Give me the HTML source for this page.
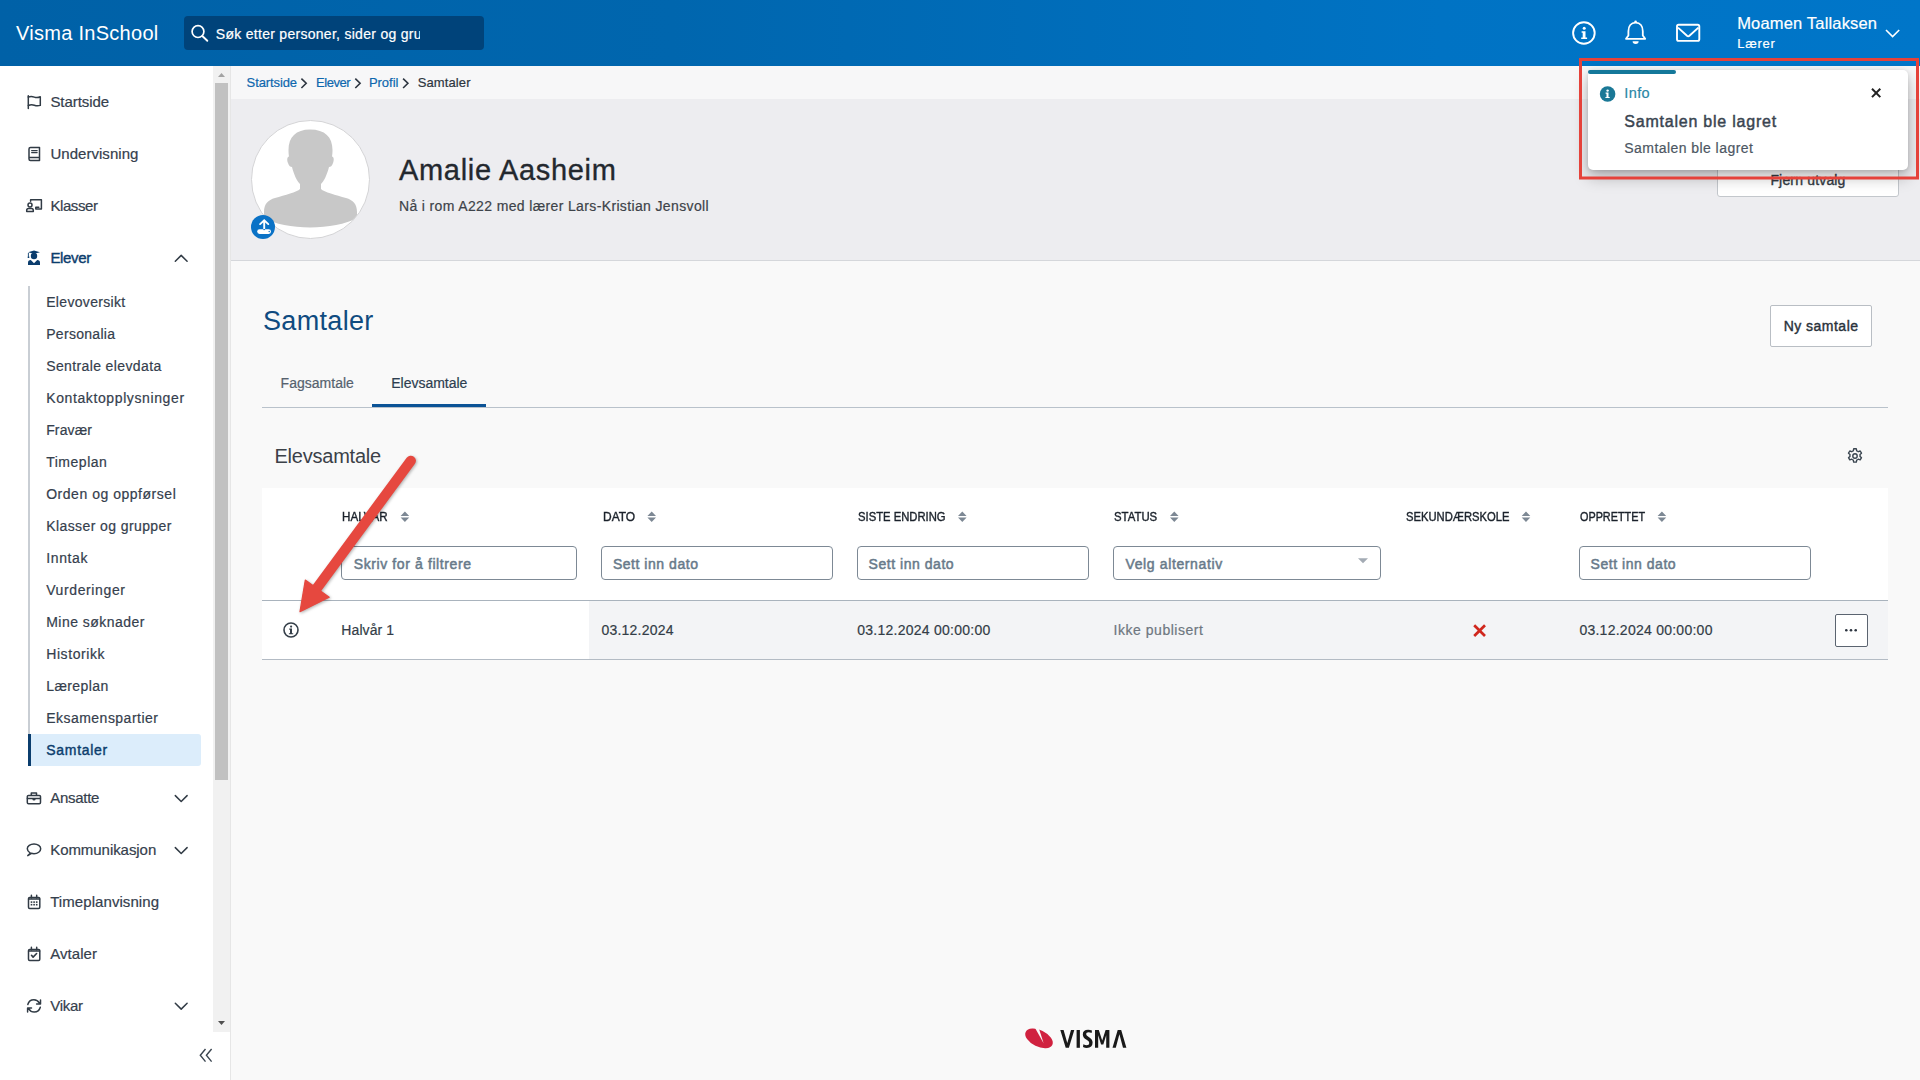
<!DOCTYPE html>
<html><head><meta charset="utf-8">
<style>
*{box-sizing:border-box;margin:0;padding:0}
html,body{width:1920px;height:1080px;overflow:hidden;background:#f9f9f9;font-family:"Liberation Sans",sans-serif;color:#333d47}
.b{position:absolute}
.t{position:absolute;white-space:nowrap;line-height:1}
svg{position:absolute;left:0;top:0;overflow:visible}
</style></head><body>
<!-- backgrounds -->
<div class="b" style="left:0;top:0;width:1920px;height:66px;background:linear-gradient(90deg,#0061a7 0%,#0066ae 35%,#0073c4 75%,#0076c9 100%)"></div>
<div class="b" style="left:184px;top:16px;width:300px;height:34px;background:#00437a;border-radius:4px"></div>
<div class="b" style="left:0;top:66px;width:213px;height:1014px;background:#fff"></div>
<div class="b" style="left:213px;top:66px;width:17px;height:966px;background:#f1f1f1"></div>
<div class="b" style="left:215px;top:83px;width:13px;height:697px;background:#c1c1c1"></div>
<div class="b" style="left:213px;top:1032px;width:17px;height:48px;background:#fff"></div>
<div class="b" style="left:230px;top:66px;width:1px;height:1014px;background:#e6e6e6"></div>
<div class="b" style="left:231px;top:66px;width:1689px;height:33px;background:#f7f7f8"></div>
<div class="b" style="left:231px;top:99px;width:1689px;height:161px;background:#ededf0"></div>
<div class="b" style="left:231px;top:260px;width:1689px;height:1px;background:#d5d7db"></div>
<!-- submenu -->
<div class="b" style="left:28px;top:286px;width:2px;height:480px;background:#c9ced4"></div>
<div class="b" style="left:28px;top:734px;width:173px;height:32px;background:#dcedfb;border-radius:0 3px 3px 0"></div>
<div class="b" style="left:28px;top:734px;width:3px;height:32px;background:#0b3d6d"></div>
<!-- avatar -->
<div class="b" style="left:251px;top:120px;width:119px;height:119px;border-radius:50%;background:#fff;border:1px solid #d4d4d6;overflow:hidden">
 <svg width="119" height="119" viewBox="251 120 119 119" style="left:-1px;top:-1px">
  <path fill="#c8c8c8" d="M310 129.5C296 129.5 288.5 137 288.5 150C288.5 153 288.7 155 289 156.5C287 157 286.8 160 288 163C289 166 290.5 167 292 167C294 175 297 181 300 184L300 189C297 192 285 195 275 198C268 200 264 204 264 212L264 218C285 230.5 335 230.5 357 218L357 212C357 204 353 200 346 198C336 195 324 192 321 189L321 184C324 181 327 175 329 167C330.5 167 332 166 333 163C334.2 160 334 157 332 156.5C332.3 155 332.5 153 332.5 150C332.5 137 325 129.5 310 129.5Z"/>
 </svg>
</div>
<div class="b" style="left:251px;top:215px;width:24px;height:24px;border-radius:50%;background:#0a72c6"></div>
<!-- Fjern utvalg button -->
<div class="b" style="left:1717px;top:158px;width:182px;height:39px;background:#fff;border:1px solid #c3c7cc;border-radius:3px"></div>
<!-- Ny samtale button -->
<div class="b" style="left:1770px;top:305px;width:102px;height:42px;background:#fff;border:1px solid #b9bec4;border-radius:2px"></div>
<!-- tabs -->
<div class="b" style="left:262px;top:407px;width:1626px;height:1px;background:#b9c2cb"></div>
<div class="b" style="left:372px;top:404px;width:114px;height:3px;background:#0b5396"></div>
<!-- table -->
<div class="b" style="left:262px;top:488px;width:1626px;height:112px;background:#fff"></div>
<div class="b" style="left:262px;top:600px;width:1626px;height:1px;background:#a9b3bd"></div>
<div class="b" style="left:262px;top:601px;width:327px;height:58px;background:#fff"></div>
<div class="b" style="left:589px;top:601px;width:1299px;height:58px;background:#f3f4f6"></div>
<div class="b" style="left:262px;top:659px;width:1626px;height:1px;background:#b3bbc4"></div>
<div class="b" style="left:341px;top:546px;width:236px;height:34px;border:1.3px solid #7d8995;border-radius:4px;background:#fff"></div>
<div class="b" style="left:601px;top:546px;width:232px;height:34px;border:1.3px solid #7d8995;border-radius:4px;background:#fff"></div>
<div class="b" style="left:857px;top:546px;width:232px;height:34px;border:1.3px solid #7d8995;border-radius:4px;background:#fff"></div>
<div class="b" style="left:1113px;top:546px;width:268px;height:34px;border:1.3px solid #7d8995;border-radius:4px;background:#fff"></div>
<div class="b" style="left:1579px;top:546px;width:232px;height:34px;border:1.3px solid #7d8995;border-radius:4px;background:#fff"></div>
<div class="b" style="left:1835px;top:614px;width:33px;height:33px;border:1px solid #5b6470;border-radius:2px;background:#fff"></div>

<!-- search text -->
<div class="b" style="left:215.8px;top:16px;width:204.5px;height:34px;overflow:hidden">
 <div class="t" style="left:0;top:11.15px;font-size:14px;color:#fff;-webkit-text-stroke:0.2px #fff;letter-spacing:0.285px">Søk etter personer, sider og gru</div>
</div>

<div class='t' style='left:16.0px;top:23.07px;font-size:20px;color:#fff;letter-spacing:0.279px;'>Visma InSchool</div>
<div class='t' style='left:1737.2px;top:15.03px;font-size:16.5px;-webkit-text-stroke:0.2px #fff;color:#fff;letter-spacing:0.170px;'>Moamen Tallaksen</div>
<div class='t' style='left:1737.2px;top:36.79px;font-size:13px;-webkit-text-stroke:0.2px #fff;color:#fff;letter-spacing:0.742px;'>Lærer</div>
<div class='t' style='left:50.4px;top:93.90px;font-size:15px;-webkit-text-stroke:0.2px #35404d;color:#35404d;letter-spacing:-0.067px;'>Startside</div>
<div class='t' style='left:50.4px;top:145.80px;font-size:15px;-webkit-text-stroke:0.2px #35404d;color:#35404d;letter-spacing:0.038px;'>Undervisning</div>
<div class='t' style='left:50.4px;top:197.80px;font-size:15px;-webkit-text-stroke:0.2px #35404d;color:#35404d;letter-spacing:-0.404px;'>Klasser</div>
<div class='t' style='left:50.4px;top:249.60px;font-size:15px;-webkit-text-stroke:0.4px #0b3d6d;color:#0b3d6d;letter-spacing:-0.322px;'>Elever</div>
<div class='t' style='left:46.2px;top:295.15px;font-size:14px;-webkit-text-stroke:0.2px #35404d;color:#35404d;letter-spacing:0.328px;'>Elevoversikt</div>
<div class='t' style='left:46.2px;top:327.15px;font-size:14px;-webkit-text-stroke:0.2px #35404d;color:#35404d;letter-spacing:0.304px;'>Personalia</div>
<div class='t' style='left:46.2px;top:359.15px;font-size:14px;-webkit-text-stroke:0.2px #35404d;color:#35404d;letter-spacing:0.378px;'>Sentrale elevdata</div>
<div class='t' style='left:46.2px;top:391.15px;font-size:14px;-webkit-text-stroke:0.2px #35404d;color:#35404d;letter-spacing:0.612px;'>Kontaktopplysninger</div>
<div class='t' style='left:46.2px;top:423.15px;font-size:14px;-webkit-text-stroke:0.2px #35404d;color:#35404d;letter-spacing:0.112px;'>Fravær</div>
<div class='t' style='left:46.2px;top:455.15px;font-size:14px;-webkit-text-stroke:0.2px #35404d;color:#35404d;letter-spacing:0.517px;'>Timeplan</div>
<div class='t' style='left:46.2px;top:487.15px;font-size:14px;-webkit-text-stroke:0.2px #35404d;color:#35404d;letter-spacing:0.526px;'>Orden og oppførsel</div>
<div class='t' style='left:46.2px;top:519.15px;font-size:14px;-webkit-text-stroke:0.2px #35404d;color:#35404d;letter-spacing:0.406px;'>Klasser og grupper</div>
<div class='t' style='left:46.2px;top:551.15px;font-size:14px;-webkit-text-stroke:0.2px #35404d;color:#35404d;letter-spacing:0.643px;'>Inntak</div>
<div class='t' style='left:46.2px;top:583.15px;font-size:14px;-webkit-text-stroke:0.2px #35404d;color:#35404d;letter-spacing:0.614px;'>Vurderinger</div>
<div class='t' style='left:46.2px;top:615.15px;font-size:14px;-webkit-text-stroke:0.2px #35404d;color:#35404d;letter-spacing:0.477px;'>Mine søknader</div>
<div class='t' style='left:46.2px;top:647.15px;font-size:14px;-webkit-text-stroke:0.2px #35404d;color:#35404d;letter-spacing:0.592px;'>Historikk</div>
<div class='t' style='left:46.2px;top:679.15px;font-size:14px;-webkit-text-stroke:0.2px #35404d;color:#35404d;letter-spacing:0.418px;'>Læreplan</div>
<div class='t' style='left:46.2px;top:711.15px;font-size:14px;-webkit-text-stroke:0.2px #35404d;color:#35404d;letter-spacing:0.477px;'>Eksamenspartier</div>
<div class='t' style='left:46.2px;top:743.35px;font-size:14px;-webkit-text-stroke:0.4px #0b3d6d;color:#0b3d6d;letter-spacing:0.721px;'>Samtaler</div>
<div class='t' style='left:50.2px;top:790.30px;font-size:15px;-webkit-text-stroke:0.2px #35404d;color:#35404d;letter-spacing:-0.268px;'>Ansatte</div>
<div class='t' style='left:50.2px;top:842.30px;font-size:15px;-webkit-text-stroke:0.2px #35404d;color:#35404d;letter-spacing:-0.055px;'>Kommunikasjon</div>
<div class='t' style='left:50.2px;top:894.30px;font-size:15px;-webkit-text-stroke:0.2px #35404d;color:#35404d;letter-spacing:0.071px;'>Timeplanvisning</div>
<div class='t' style='left:50.2px;top:946.30px;font-size:15px;-webkit-text-stroke:0.2px #35404d;color:#35404d;letter-spacing:0.054px;'>Avtaler</div>
<div class='t' style='left:50.2px;top:998.00px;font-size:15px;-webkit-text-stroke:0.2px #35404d;color:#35404d;letter-spacing:-0.261px;'>Vikar</div>
<div class='t' style='left:246.6px;top:75.79px;font-size:13px;-webkit-text-stroke:0.2px #0e67ae;color:#0e67ae;letter-spacing:-0.101px;'>Startside</div>
<div class='t' style='left:316.1px;top:75.79px;font-size:13px;-webkit-text-stroke:0.2px #0e67ae;color:#0e67ae;letter-spacing:-0.493px;'>Elever</div>
<div class='t' style='left:368.9px;top:75.79px;font-size:13px;-webkit-text-stroke:0.2px #0e67ae;color:#0e67ae;letter-spacing:-0.021px;'>Profil</div>
<div class='t' style='left:417.7px;top:75.79px;font-size:13px;-webkit-text-stroke:0.2px #2d3540;color:#2d3540;letter-spacing:0.121px;'>Samtaler</div>
<div class='t' style='left:399.0px;top:156.45px;font-size:29px;-webkit-text-stroke:0.35px #23282e;color:#23282e;letter-spacing:0.683px;'>Amalie Aasheim</div>
<div class='t' style='left:399.0px;top:199.45px;font-size:14px;-webkit-text-stroke:0.2px #3d4349;color:#3d4349;letter-spacing:0.362px;'>Nå i rom A222 med lærer Lars-Kristian Jensvoll</div>
<div class='t' style='left:1770.4px;top:172.95px;font-size:14px;-webkit-text-stroke:0.35px #333a42;color:#333a42;letter-spacing:0.170px;'>Fjern utvalg</div>
<div class='t' style='left:263.0px;top:307.74px;font-size:27px;color:#0f4b80;letter-spacing:0.332px;'>Samtaler</div>
<div class='t' style='left:1783.7px;top:319.25px;font-size:14px;-webkit-text-stroke:0.4px #2a323b;color:#2a323b;letter-spacing:0.477px;'>Ny samtale</div>
<div class='t' style='left:280.6px;top:375.85px;font-size:14px;-webkit-text-stroke:0.2px #56626e;color:#56626e;letter-spacing:0.014px;'>Fagsamtale</div>
<div class='t' style='left:391.3px;top:375.85px;font-size:14px;-webkit-text-stroke:0.2px #2d3e50;color:#2d3e50;letter-spacing:-0.024px;'>Elevsamtale</div>
<div class='t' style='left:274.4px;top:446.27px;font-size:20px;color:#3b4148;letter-spacing:-0.213px;'>Elevsamtale</div>
<div class='t' style='left:342.2px;top:510.56px;font-size:12.8px;-webkit-text-stroke:0.4px #1b222b;color:#1b222b;letter-spacing:0.000px;transform:scaleX(0.9072);transform-origin:0 0;'>HALVÅR</div>
<div class='t' style='left:602.7px;top:510.56px;font-size:12.8px;-webkit-text-stroke:0.4px #1b222b;color:#1b222b;letter-spacing:0.000px;transform:scaleX(0.9367);transform-origin:0 0;'>DATO</div>
<div class='t' style='left:858.1px;top:510.56px;font-size:12.8px;-webkit-text-stroke:0.4px #1b222b;color:#1b222b;letter-spacing:0.000px;transform:scaleX(0.8800);transform-origin:0 0;'>SISTE ENDRING</div>
<div class='t' style='left:1114.0px;top:510.56px;font-size:12.8px;-webkit-text-stroke:0.4px #1b222b;color:#1b222b;letter-spacing:0.000px;transform:scaleX(0.8890);transform-origin:0 0;'>STATUS</div>
<div class='t' style='left:1405.7px;top:510.56px;font-size:12.8px;-webkit-text-stroke:0.4px #1b222b;color:#1b222b;letter-spacing:0.000px;transform:scaleX(0.8768);transform-origin:0 0;'>SEKUNDÆRSKOLE</div>
<div class='t' style='left:1579.9px;top:510.56px;font-size:12.8px;-webkit-text-stroke:0.4px #1b222b;color:#1b222b;letter-spacing:0.000px;transform:scaleX(0.8464);transform-origin:0 0;'>OPPRETTET</div>
<div class='t' style='left:353.7px;top:556.85px;font-size:14px;-webkit-text-stroke:0.5px #687a8a;color:#687a8a;letter-spacing:0.609px;'>Skriv for å filtrere</div>
<div class='t' style='left:612.9px;top:556.85px;font-size:14px;-webkit-text-stroke:0.5px #687a8a;color:#687a8a;letter-spacing:0.537px;'>Sett inn dato</div>
<div class='t' style='left:868.6px;top:556.85px;font-size:14px;-webkit-text-stroke:0.5px #687a8a;color:#687a8a;letter-spacing:0.537px;'>Sett inn dato</div>
<div class='t' style='left:1590.6px;top:556.85px;font-size:14px;-webkit-text-stroke:0.5px #687a8a;color:#687a8a;letter-spacing:0.537px;'>Sett inn dato</div>
<div class='t' style='left:1125.5px;top:556.85px;font-size:14px;-webkit-text-stroke:0.5px #687a8a;color:#687a8a;letter-spacing:0.623px;'>Velg alternativ</div>
<div class='t' style='left:341.3px;top:623.05px;font-size:14px;-webkit-text-stroke:0.2px #333d47;color:#333d47;letter-spacing:0.095px;'>Halvår 1</div>
<div class='t' style='left:601.4px;top:623.05px;font-size:14px;-webkit-text-stroke:0.2px #333d47;color:#333d47;letter-spacing:0.232px;'>03.12.2024</div>
<div class='t' style='left:857.2px;top:623.05px;font-size:14px;-webkit-text-stroke:0.2px #333d47;color:#333d47;letter-spacing:0.254px;'>03.12.2024 00:00:00</div>
<div class='t' style='left:1113.5px;top:623.05px;font-size:14px;-webkit-text-stroke:0.2px #6e7780;color:#6e7780;letter-spacing:0.537px;'>Ikke publisert</div>
<div class='t' style='left:1579.4px;top:623.05px;font-size:14px;-webkit-text-stroke:0.2px #333d47;color:#333d47;letter-spacing:0.254px;'>03.12.2024 00:00:00</div>

<!-- icons layer -->
<svg width="1920" height="1080">
 <!-- search icon -->
 <circle cx="198" cy="31.6" r="5.9" fill="none" stroke="#fff" stroke-width="1.7"/>
 <path d="M202.3 36l5 4.8" stroke="#fff" stroke-width="1.9" stroke-linecap="round"/>
 <!-- header info -->
 <circle cx="1583.9" cy="33" r="10.8" fill="none" stroke="#fff" stroke-width="1.9"/>
 <circle cx="1584.2" cy="28.3" r="1.5" fill="#fff"/>
 <path d="M1581.6 31.2h3.9v6.4h1.6v1.5h-5.9v-1.5h1.5v-4.9h-1.1z" fill="#fff"/>
 <!-- bell -->
 <path d="M1635.6 22.6c-4.6 0-7.2 3.6-7.2 8.6v4.3l-2.4 3.3h19.2l-2.4-3.3v-4.3c0-5-2.6-8.6-7.2-8.6z" fill="none" stroke="#fff" stroke-width="1.8" stroke-linejoin="round"/>
 <circle cx="1635.6" cy="21.8" r="1.3" fill="#fff"/>
 <path d="M1632.6 41.3h6a3 2.6 0 0 1-6 0z" fill="#fff"/>
 <!-- mail -->
 <rect x="1677" y="24.8" width="22.3" height="16.1" rx="1.6" fill="none" stroke="#fff" stroke-width="1.9"/>
 <path d="M1678 27.6l9 8.2q1.2 1 2.4 0l9-8.2" fill="none" stroke="#fff" stroke-width="1.9"/>
 <!-- user chevron -->
 <path d="M1886 30l6.6 6.6 6.6-6.6" fill="none" stroke="#fff" stroke-width="1.6"/>

 <!-- sidebar icons -->
 <g fill="none" stroke="#313b45" stroke-width="1.5" stroke-linecap="round" stroke-linejoin="round">
  <!-- flag -->
  <path d="M28.3 95.8v12.6"/>
  <path d="M28.3 97q3-1 6 .1t6-.3v8.6q-3 .9-6-.2t-6 .3"/>
  <!-- book -->
  <path d="M29 149q0-1.5 1.5-1.5h9v13h-9q-1.5 0-1.5-1.5zM29 157.5h10.5"/>
  <path d="M31.6 150.6h5.6M31.6 152.6h5.6" stroke-width="1.1"/>
  <!-- klasser -->
  <path d="M30.6 201.2v-1.4h10.8v9.3h-5.6v-1.8h3"/>
  <circle cx="30" cy="205" r="2"/>
  <path d="M26.7 211.6v-1.2q0-1.8 1.8-1.8h3q1.8 0 1.8 1.8v1.2z"/>
  <!-- briefcase -->
  <rect x="27.3" y="795.4" width="13.2" height="8.3" rx="1.2"/>
  <path d="M31.3 795.2v-2.3h5.2v2.3M27.4 798.4h13"/>
  <!-- chat -->
  <path d="M30.3 853.2q-3-2-3-4.4c0-2.7 3-4.8 6.7-4.8s6.7 2.1 6.7 4.8-3 4.9-6.7 4.9q-1.6 0-2.6-.4l-3.6 2.3z"/>
  <!-- calendar -->
  <rect x="28.5" y="897.5" width="11.3" height="11" rx="1.2"/>
  <path d="M31.4 895.3v2.2M36.7 895.3v2.2M28.6 899h11"/>
  <!-- cal check -->
  <rect x="28.5" y="949.5" width="11.3" height="11" rx="1.2"/>
  <path d="M31.4 947.3v2.2M36.7 947.3v2.2M28.6 951h11"/>
  <path d="M31.5 955.3l1.6 1.8 3.5-3.6" stroke-width="1.6"/>
  <!-- refresh -->
  <path d="M27.8 1004.5q1.3-4.8 6.1-4.8 3.6 0 5.4 3.2M40.5 1000v3.9h-3.9"/>
  <path d="M40.3 1007.3q-1.3 4.8-6.1 4.8-3.6 0-5.4-3.2M27.6 1012v-3.9h3.9"/>
  <!-- chevrons -->
  <path d="M175.3 261.3l5.9-5.9 5.9 5.9"/>
  <path d="M175.3 795.6l5.9 5.9 5.9-5.9"/>
  <path d="M175.3 847.6l5.9 5.9 5.9-5.9"/>
  <path d="M175.3 1003.2l5.9 5.9 5.9-5.9"/>
 </g>
 <g fill="#313b45">
  <rect x="30.7" y="901.3" width="1.6" height="1.6"/><rect x="33.3" y="901.3" width="1.6" height="1.6"/><rect x="35.9" y="901.3" width="1.6" height="1.6"/>
  <rect x="30.7" y="903.9" width="1.6" height="1.6"/><rect x="33.3" y="903.9" width="1.6" height="1.6"/><rect x="35.9" y="903.9" width="1.6" height="1.6"/>
  <path d="M32.4 798.6h3.2v.6q0 1.4-1.6 1.4t-1.6-1.4z"/>
 </g>
 <!-- elever icon -->
 <g fill="#0b3d6d">
  <path d="M28 252.2l6-1.6 6 1.6-6 1.6z"/>
  <circle cx="34" cy="256" r="3.2"/>
  <path d="M28.4 253v3.8" stroke="#0b3d6d" stroke-width=".9"/>
  <circle cx="28.5" cy="257.2" r=".9"/>
  <path d="M28 265.1v-2.3q0-2.8 2.8-2.8l3.2 3.2 3.2-3.2q2.8 0 2.8 2.8v2.3z"/>
 </g>
 <!-- scrollbar arrows -->
 <path d="M218 77h7l-3.5-4z" fill="#a3a3a3"/>
 <path d="M218 1021h7l-3.5 4z" fill="#505050"/>
 <!-- collapse -->
 <path d="M205.5 1049l-5.2 6.3 5.2 6.3M211.6 1049l-5.2 6.3 5.2 6.3" fill="none" stroke="#3b4550" stroke-width="1.4"/>
 <!-- breadcrumb chevrons -->
 <g fill="none" stroke="#2d3540" stroke-width="1.6">
  <path d="M301.4 78.6l4.8 4.7-4.8 4.7"/>
  <path d="M355.3 78.6l4.8 4.7-4.8 4.7"/>
  <path d="M403.1 78.6l4.8 4.7-4.8 4.7"/>
 </g>
 <!-- upload badge icon -->
 <path d="M260.1 224.1l4.1-3.8 4.1 3.8M264.2 220.8v9.4" fill="none" stroke="#fff" stroke-width="1.9" stroke-linecap="round"/>
 <rect x="257.2" y="229.3" width="13.8" height="4.6" rx="2.3" fill="#fff"/>
 <rect x="263.3" y="229.1" width="1.8" height="1" fill="#0a72c6"/>
 <circle cx="269.2" cy="231.5" r=".7" fill="#0a72c6"/>
 <!-- gear -->
 <g transform="translate(1855 456)">
  <path d="M-1.3-7.2h2.6l.4 2a5.4 5.4 0 0 1 1.6.9l1.9-.7 1.3 2.2-1.5 1.3a5.4 5.4 0 0 1 0 1.9l1.5 1.3-1.3 2.2-1.9-.7a5.4 5.4 0 0 1-1.6.9l-.4 2h-2.6l-.4-2a5.4 5.4 0 0 1-1.6-.9l-1.9.7-1.3-2.2 1.5-1.3a5.4 5.4 0 0 1 0-1.9l-1.5-1.3 1.3-2.2 1.9.7a5.4 5.4 0 0 1 1.6-.9z" fill="none" stroke="#3a4550" stroke-width="1.4" stroke-linejoin="round"/>
  <circle r="2.2" fill="none" stroke="#3a4550" stroke-width="1.4"/>
 </g>
 <!-- sort icons -->
 <g fill="#7d8894">
  <path d="M400.6 515.9h8.6l-4.3-4.4zM400.6 517.6h8.6l-4.3 4.4z"/>
  <path d="M647.4 515.9h8.6l-4.3-4.4zM647.4 517.6h8.6l-4.3 4.4z"/>
  <path d="M958.0 515.9h8.6l-4.3-4.4zM958.0 517.6h8.6l-4.3 4.4z"/>
  <path d="M1170.0 515.9h8.6l-4.3-4.4zM1170.0 517.6h8.6l-4.3 4.4z"/>
  <path d="M1521.7 515.9h8.6l-4.3-4.4zM1521.7 517.6h8.6l-4.3 4.4z"/>
  <path d="M1657.6 515.9h8.6l-4.3-4.4zM1657.6 517.6h8.6l-4.3 4.4z"/>
 </g>
 <!-- select caret -->
 <path d="M1358 558.2h10l-5 5z" fill="#a3abb4"/>
 <!-- row info icon -->
 <circle cx="291" cy="630" r="7" fill="none" stroke="#353f49" stroke-width="1.6"/>
 <circle cx="291.1" cy="626.6" r="1.1" fill="#353f49"/>
 <path d="M289.2 628.6h2.8v4.6h1.2v1.1h-4.3v-1.1h1.1v-3.5h-.8z" fill="#353f49"/>
 <!-- red x -->
 <path d="M1474.2 625.2l10.8 10.8M1485 625.2l-10.8 10.8" stroke="#d0271d" stroke-width="2.7"/>
 <!-- dots -->
 <g fill="#2d3540"><circle cx="1846.3" cy="630.3" r="1.3"/><circle cx="1851" cy="630.3" r="1.3"/><circle cx="1855.7" cy="630.3" r="1.3"/></g>
 <!-- VISMA logo -->
 <g>
  <ellipse cx="1039" cy="1038.4" rx="14.8" ry="8.2" transform="rotate(26 1039 1038.4)" fill="#d0213f"/>
  <path d="M1034.8 1027.5L1038.6 1027.5 1043.6 1043.2z" fill="#f9f9f9"/>
  <g fill="#1a1a1a">
   <path d="M1060.3 1030h3.3l3.7 13 3.7-13h3.3l-5.4 17.8h-3.2z"/>
   <path d="M1076.6 1030h3.3v17.8h-3.3z"/>
   <path d="M1091.6 1033.1q-1.6-.9-3.1-.9-2.4 0-2.4 1.9 0 1.3 2.6 2.9 3.9 2.3 3.9 5.6 0 5.4-5.8 5.4-1.9 0-3.8-.9l.4-2.9q1.7 1 3.3 1 2.6 0 2.6-2.3 0-1.6-2.7-3.1-3.8-2.2-3.8-5.4 0-4.6 5.4-4.6 1.8 0 3.8.7z"/>
   <path d="M1095 1047.8v-17.8h3.8l3.4 10.5 3.4-10.5h3.8v17.8h-3.2v-12.5l-2.9 9.2h-2.2l-2.9-9.2v12.5z"/>
   <path d="M1112.5 1047.8l5.2-17.8h3.5l5.2 17.8h-3.4l-3.6-13.6-3.6 13.6z"/>
  </g>
 </g>
</svg>

<!-- toast -->
<div class="b" style="left:1588px;top:70px;width:320px;height:100px;background:#fff;border-radius:5px;box-shadow:0 7px 16px rgba(0,0,0,.28),0 1px 4px rgba(0,0,0,.12)"></div>
<div class="b" style="left:1588px;top:70px;width:88px;height:4px;background:#14789a;border-radius:2px"></div>
<div class='t' style='left:1624.3px;top:86.32px;font-size:14.5px;-webkit-text-stroke:0.2px #2b87a6;color:#2b87a6;letter-spacing:0.378px;'>Info</div>
<div class='t' style='left:1624.3px;top:114.25px;font-size:16px;-webkit-text-stroke:0.45px #3a4550;color:#3a4550;letter-spacing:0.776px;'>Samtalen ble lagret</div>
<div class='t' style='left:1624.3px;top:141.15px;font-size:14px;-webkit-text-stroke:0.2px #4d5763;color:#4d5763;letter-spacing:0.440px;'>Samtalen ble lagret</div>
<svg width="1920" height="1080">
 <circle cx="1607.6" cy="94" r="7.8" fill="#1a7896"/>
 <circle cx="1607.6" cy="90.6" r="1.2" fill="#fff"/>
 <path d="M1605.6 92.6h2.9v4.3h1.2v1.2h-4.3v-1.2h1.1v-3.1h-.9z" fill="#fff"/>
 <path d="M1872 88.8l8.3 8.3M1880.3 88.8l-8.3 8.3" stroke="#222" stroke-width="2"/>
 <!-- red outline -->
 <rect x="1580.5" y="59.5" width="337" height="118.5" fill="none" stroke="#e5423a" stroke-width="3"/>
 <!-- arrow -->
 <g style="filter:drop-shadow(1px 1.5px 1.5px rgba(0,0,0,.3))">
  <path d="M410.8 460.8L317 588" stroke="#e6483f" stroke-width="10.3" stroke-linecap="round"/>
  <path d="M300 611.7L305.3 580 329.2 597.3z" fill="#e6483f" stroke="#e6483f" stroke-width="1.2" stroke-linejoin="round"/>
 </g>
</svg>
</body></html>
